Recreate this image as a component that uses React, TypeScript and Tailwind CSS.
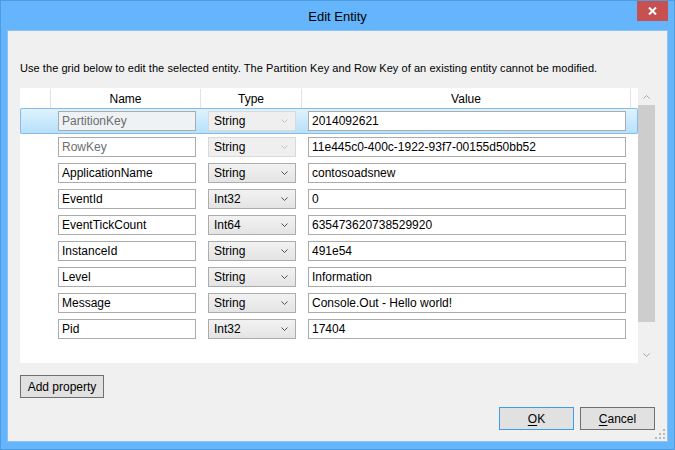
import React from 'react'

type Row = { name: string; type: string; value: string; locked?: boolean }

const ROWS: Row[] = [
  { name: 'PartitionKey', type: 'String', value: '2014092621', locked: true },
  { name: 'RowKey', type: 'String', value: '11e445c0-400c-1922-93f7-00155d50bb52', locked: true },
  { name: 'ApplicationName', type: 'String', value: 'contosoadsnew' },
  { name: 'EventId', type: 'Int32', value: '0' },
  { name: 'EventTickCount', type: 'Int64', value: '635473620738529920' },
  { name: 'InstanceId', type: 'String', value: '491e54' },
  { name: 'Level', type: 'String', value: 'Information' },
  { name: 'Message', type: 'String', value: 'Console.Out - Hello world!' },
  { name: 'Pid', type: 'Int32', value: '17404' },
]

function Chevron({ up, color }: { up?: boolean; color: string }) {
  return (
    <svg width="7" height="4" viewBox="0 0 7 4" className="block">
      <path
        d={up ? 'M0.5 3.5 L3.5 0.5 L6.5 3.5' : 'M0.5 0.5 L3.5 3.5 L6.5 0.5'}
        fill="none"
        stroke={color}
        strokeWidth="1"
      />
    </svg>
  )
}

function GridRow({ row, selected }: { row: Row; selected?: boolean }) {
  return (
    <div
      className={
        selected
          ? 'flex h-[26px] items-center rounded-[2px] bg-gradient-to-b from-[#e0f3fe] to-[#b6e0fb] shadow-[inset_0_0_0_1px_#86bbec]'
          : 'flex h-[26px] items-center'
      }
    >
      <div className="w-[31px] shrink-0" />
      <div className="w-[150px] shrink-0 pl-[7px]">
        <div
          className={
            'flex h-[20px] w-[138px] items-center border border-[#ababab] pl-[3px] ' +
            (row.locked
              ? selected
                ? 'bg-[#eef2f5] text-[#6d6d6d]'
                : 'bg-white text-[#6d6d6d]'
              : 'bg-white text-black')
          }
        >
          {row.name}
        </div>
      </div>
      <div className="w-[101px] shrink-0 pl-[7px]">
        <div
          className={
            'flex h-[20px] w-[88px] items-center justify-between border pl-[5px] pr-[7px] text-black ' +
            (row.locked
              ? 'border-[#d9d9d9] bg-[#efefef]'
              : 'border-[#acacac] bg-gradient-to-b from-[#f2f2f2] to-[#e4e4e4]')
          }
        >
          <span>{row.type}</span>
          <Chevron color={row.locked ? '#c4c4c4' : '#505050'} />
        </div>
      </div>
      <div className="w-[329px] shrink-0 pl-[6px]">
        <div className="flex h-[20px] w-[318px] items-center border border-[#ababab] bg-white pl-[3px] text-black">
          {row.value}
        </div>
      </div>
    </div>
  )
}

function Button({ children, focused, className }: { children: React.ReactNode; focused?: boolean; className?: string }) {
  return (
    <button
      className={
        'flex h-[23px] items-center justify-center border bg-[#e1e1e1] text-[12px] text-black ' +
        (focused ? 'border-[#3c9cf0] ' : 'border-[#707070] ') +
        (className ?? '')
      }
    >
      {children}
    </button>
  )
}

export default function App() {
  return (
    <div className="relative flex h-[450px] w-[675px] flex-col border border-[#4f9be0] bg-[#64b5fb] font-['Liberation_Sans',Arial,sans-serif] text-[12px]">
      {/* title bar */}
      <div className="flex h-[29px] shrink-0 items-center justify-center pt-[3px] text-[13px] text-black">
        Edit Entity
      </div>
      <div className="absolute right-[6px] top-0 flex h-[20px] w-[31px] items-center justify-center bg-[#c75050]">
        <svg width="9" height="8" viewBox="0 0 9 8">
          <path d="M1 0.5 L8 7.5 M8 0.5 L1 7.5" stroke="#fff" strokeWidth="2" />
        </svg>
      </div>

      {/* client area */}
      <div className="relative mx-[6px] mb-[7px] flex flex-1 flex-col border border-[#8dc3f2] bg-[#f0f0f0] px-[12px] pt-[30px]">
        <div className="text-[11px] leading-[14px] tracking-[0.06px] text-black">
          Use the grid below to edit the selected entity. The Partition Key and Row Key of an existing entity cannot be modified.
        </div>

        {/* grid */}
        <div className="mt-[13px] flex h-[275px]">
          <div className="w-[618px] bg-white">
            <div className="flex h-[20px] items-center pt-[1px] text-black">
              <div className="h-full w-[31px] shrink-0 border-r border-[#e2e2e2]" />
              <div className="flex h-full w-[150px] shrink-0 items-center justify-center border-r border-[#e2e2e2]">Name</div>
              <div className="flex h-full w-[101px] shrink-0 items-center justify-center border-r border-[#e2e2e2]">Type</div>
              <div className="flex h-full w-[329px] shrink-0 items-center justify-center border-r border-[#e2e2e2]">Value</div>
            </div>
            {ROWS.map((r, i) => (
              <GridRow key={r.name} row={r} selected={i === 0} />
            ))}
          </div>
          <div className="flex w-[17px] flex-col bg-[#f0f0f0]">
            <div className="flex h-[17px] items-center justify-center">
              <Chevron up color="#a6a6a6" />
            </div>
            <div className="h-[217px] bg-[#cdcdcd]" />
            <div className="flex-1" />
            <div className="flex h-[17px] items-center justify-center">
              <Chevron color="#a6a6a6" />
            </div>
          </div>
        </div>

        <div className="mt-[12px] flex">
          <Button className="w-[84px]">Add property</Button>
        </div>

        <div className="mt-[9px] flex justify-end gap-[6px]">
          <Button focused className="w-[75px]">
            <span className="underline underline-offset-2">O</span>K
          </Button>
          <Button className="w-[75px]">
            <span className="underline underline-offset-2">C</span>ancel
          </Button>
        </div>

        {/* resize grip */}
        <svg className="absolute bottom-[2px] right-[2px]" width="10" height="10" viewBox="0 0 10 10">
          {[
            [8, 0], [8, 4], [4, 4], [8, 8], [4, 8], [0, 8],
          ].map(([x, y]) => (
            <rect key={`${x}-${y}`} x={x} y={y} width="2" height="2" fill="#b9b9b9" />
          ))}
        </svg>
      </div>
    </div>
  )
}
